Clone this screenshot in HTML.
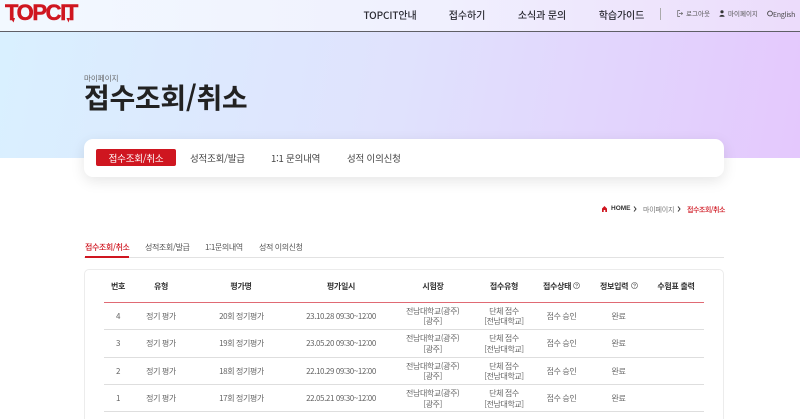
<!DOCTYPE html>
<html lang="ko"><head><meta charset="utf-8"><title>접수조회/취소</title>
<style>
*{box-sizing:border-box}
html,body{margin:0;padding:0;background:#fff;overflow:hidden;width:800px;height:419px}
#w{width:800px;height:419px;position:relative;overflow:hidden;font-family:"Noto Sans CJK KR","Liberation Sans",sans-serif;color:#222}
.a{position:absolute;white-space:nowrap;line-height:1}
.c{transform:translateX(-50%);text-align:center}
.hdr{position:absolute;left:0;top:0;width:800px;height:32px;background:linear-gradient(90deg,#f2f9ff 0%,#f0f0fe 55%,#ecdcfb 100%);border-bottom:1px solid #5f5f66}
.hero{position:absolute;left:0;top:32px;width:800px;height:126px;background:linear-gradient(100deg,#d9f0ff 0%,#e0e2fd 50%,#e4c8fd 100%)}
.card{position:absolute;left:84px;top:139px;width:640px;height:38px;background:#fff;border-radius:9px;box-shadow:0 4px 14px rgba(0,0,0,.1)}
.btn{position:absolute;left:96px;top:149px;width:80px;height:17px;background:#cf1620;border-radius:2px;color:#fff;font-size:9.5px;letter-spacing:-.2px;line-height:18px;text-align:center}
.nav{font-size:10px;letter-spacing:-.1px;font-weight:500;color:#2b2b33;top:9.5px}
.tab{font-size:9.5px;letter-spacing:-.2px;color:#444;top:153.5px}
.sub{font-size:8px;letter-spacing:-.4px;color:#555;top:243.5px}
.sec{position:absolute;left:84px;top:257px;width:640px;height:1px;background:#e2e2e2}
.box{position:absolute;left:84px;top:269px;width:640px;height:170px;border:1px solid #ececec;border-radius:5px;background:#fff}
.th{font-size:8px;letter-spacing:-.3px;font-weight:700;color:#333;top:282.5px}
.td{font-size:8px;letter-spacing:-.4px;color:#666}
.two{line-height:10.5px}
.ln{position:absolute;left:104px;width:600px;height:1px;background:#dedede}
</style></head><body><div id="w">
<div class="hdr"></div>
<div class="hero"></div>
<div class="a" style="left:5px;top:0;font-family:'Liberation Sans',sans-serif;font-size:22px;font-weight:700;color:#cf1620;letter-spacing:-1.4px;line-height:26px;-webkit-text-stroke:.5px #cf1620">TOPCIT</div>
<svg style="position:absolute;left:0;top:0" width="90" height="26" viewBox="0 0 90 26"><path d="M10.5 18L13.5 22.5L15 18ZM66.5 18L68.5 22.5L70 18Z" fill="#cf1620"/></svg>
<div class="a nav c" style="left:390px">TOPCIT안내</div>
<div class="a nav c" style="left:467px">접수하기</div>
<div class="a nav c" style="left:542px">소식과 문의</div>
<div class="a nav c" style="left:621.5px">학습가이드</div>
<div style="position:absolute;left:660px;top:8px;width:1px;height:12px;background:#aaa"></div>
<svg style="position:absolute;left:677px;top:10px" width="6" height="7" viewBox="0 0 6 7"><path d="M3 .5H.7V6.5H3M2 3.5H5.5M4.3 2.2L5.6 3.5L4.3 4.8" fill="none" stroke="#666" stroke-width=".7"/></svg>
<div class="a" style="left:686px;top:10px;font-size:6.5px;color:#555">로그아웃</div>
<svg style="position:absolute;left:719px;top:10px" width="6" height="7" viewBox="0 0 6 7"><circle cx="3" cy="1.8" r="1.6" fill="#333"/><path d="M.4 6.8C.6 4.3 5.4 4.3 5.6 6.8Z" fill="#333"/></svg>
<div class="a" style="left:728px;top:10px;font-size:6.5px;color:#555">마이페이지</div>
<svg style="position:absolute;left:767px;top:10px" width="6" height="7" viewBox="0 0 6 7"><circle cx="3" cy="3.5" r="2.4" fill="none" stroke="#444" stroke-width=".9"/></svg>
<div class="a" style="left:773px;top:11px;font-size:6.8px;letter-spacing:-.15px;color:#444">English</div>

<div class="a" style="left:84px;top:74.5px;font-size:7.5px;color:#666">마이페이지</div>
<div class="a" style="left:84px;top:81px;font-size:28px;font-weight:700;color:#222;line-height:33px;letter-spacing:-.3px">접수조회/취소</div>

<div class="card"></div>
<div class="btn">접수조회/취소</div>
<div class="a tab" style="left:190px">성적조회/발급</div>
<div class="a tab" style="left:271px">1:1 문의내역</div>
<div class="a tab" style="left:347px">성적 이의신청</div>

<svg style="position:absolute;left:602px;top:206px" width="5" height="6" viewBox="0 0 5 6"><path d="M2.5 0L5 2.5V6H3.3V4H1.7V6H0V2.5Z" fill="#cf1620"/></svg>
<div class="a" style="left:611px;top:206px;font-size:6.5px;font-weight:700;color:#333;font-family:'Liberation Sans',sans-serif">HOME</div>
<svg style="position:absolute;left:633px;top:206px" width="4" height="6" viewBox="0 0 4 6"><path d="M1 .5L3 3L1 5.5" fill="none" stroke="#333" stroke-width="1"/></svg>
<div class="a" style="left:643px;top:206.5px;font-size:7px;letter-spacing:-.2px;color:#777">마이페이지</div>
<svg style="position:absolute;left:677px;top:206px" width="4" height="6" viewBox="0 0 4 6"><path d="M1 .5L3 3L1 5.5" fill="none" stroke="#333" stroke-width="1"/></svg>
<div class="a" style="left:687px;top:206.5px;font-size:7px;letter-spacing:-.5px;font-weight:500;color:#cf1620">접수조회/취소</div>

<div class="a sub" style="left:85px;font-weight:500;color:#cf1620">접수조회/취소</div>
<div style="position:absolute;left:85px;top:256px;width:44px;height:2px;background:#cf1620;z-index:2"></div>
<div class="a sub" style="left:145px">성적조회/발급</div>
<div class="a sub" style="left:205px">1:1문의내역</div>
<div class="a sub" style="left:259px">성적 이의신청</div>
<div class="sec"></div>
<div class="box"></div>

<div class="a th c" style="left:118px">번호</div>
<div class="a th c" style="left:161px">유형</div>
<div class="a th c" style="left:241px">평가명</div>
<div class="a th c" style="left:341px">평가일시</div>
<div class="a th c" style="left:433px">시험장</div>
<div class="a th c" style="left:504px">접수유형</div>
<div class="a th" style="left:543px">접수상태</div>
<div class="a th" style="left:600px">정보입력</div>
<div class="a th c" style="left:676px">수험표 출력</div>
<svg style="position:absolute;left:573px;top:282px" width="7" height="7" viewBox="0 0 7 7"><circle cx="3.5" cy="3.5" r="3" fill="none" stroke="#555" stroke-width=".6"/><path d="M2.5 2.7C2.7 1.7 4.5 1.7 4.5 2.7C4.5 3.4 3.5 3.4 3.5 4.4M3.5 5V5.5" fill="none" stroke="#555" stroke-width=".6"/></svg>
<svg style="position:absolute;left:631px;top:282px" width="7" height="7" viewBox="0 0 7 7"><circle cx="3.5" cy="3.5" r="3" fill="none" stroke="#555" stroke-width=".6"/><path d="M2.5 2.7C2.7 1.7 4.5 1.7 4.5 2.7C4.5 3.4 3.5 3.4 3.5 4.4M3.5 5V5.5" fill="none" stroke="#555" stroke-width=".6"/></svg>
<div class="ln" style="top:302px;background:#e06a74"></div>

<div class="a td c" style="left:118px;top:313px">4</div>
<div class="a td c" style="left:161px;top:313px">정기 평가</div>
<div class="a td c" style="left:241.5px;top:313px">20회 정기평가</div>
<div class="a td c" style="left:341px;top:313px">23.10.28 09:30~12:00</div>
<div class="a td c two" style="left:432.7px;top:306.5px">전남대학교(광주)<br>[광주]</div>
<div class="a td c two" style="left:504px;top:306.5px">단체 접수<br>[전남대학교]</div>
<div class="a td c" style="left:561.5px;top:313px">접수 승인</div>
<div class="a td c" style="left:618.5px;top:313px">완료</div>
<div class="ln" style="top:329px"></div>

<div class="a td c" style="left:118px;top:340px">3</div>
<div class="a td c" style="left:161px;top:340px">정기 평가</div>
<div class="a td c" style="left:241.5px;top:340px">19회 정기평가</div>
<div class="a td c" style="left:341px;top:340px">23.05.20 09:30~12:00</div>
<div class="a td c two" style="left:432.7px;top:334px">전남대학교(광주)<br>[광주]</div>
<div class="a td c two" style="left:504px;top:334px">단체 접수<br>[전남대학교]</div>
<div class="a td c" style="left:561.5px;top:340px">접수 승인</div>
<div class="a td c" style="left:618.5px;top:340px">완료</div>
<div class="ln" style="top:357px"></div>

<div class="a td c" style="left:118px;top:368px">2</div>
<div class="a td c" style="left:161px;top:368px">정기 평가</div>
<div class="a td c" style="left:241.5px;top:368px">18회 정기평가</div>
<div class="a td c" style="left:341px;top:368px">22.10.29 09:30~12:00</div>
<div class="a td c two" style="left:432.7px;top:361.5px">전남대학교(광주)<br>[광주]</div>
<div class="a td c two" style="left:504px;top:361.5px">단체 접수<br>[전남대학교]</div>
<div class="a td c" style="left:561.5px;top:368px">접수 승인</div>
<div class="a td c" style="left:618.5px;top:368px">완료</div>
<div class="ln" style="top:384px"></div>

<div class="a td c" style="left:118px;top:395px">1</div>
<div class="a td c" style="left:161px;top:395px">정기 평가</div>
<div class="a td c" style="left:241.5px;top:395px">17회 정기평가</div>
<div class="a td c" style="left:341px;top:395px">22.05.21 09:30~12:00</div>
<div class="a td c two" style="left:432.7px;top:389px">전남대학교(광주)<br>[광주]</div>
<div class="a td c two" style="left:504px;top:389px">단체 접수<br>[전남대학교]</div>
<div class="a td c" style="left:561.5px;top:395px">접수 승인</div>
<div class="a td c" style="left:618.5px;top:395px">완료</div>
<div class="ln" style="top:411px"></div>
</div></body></html>
